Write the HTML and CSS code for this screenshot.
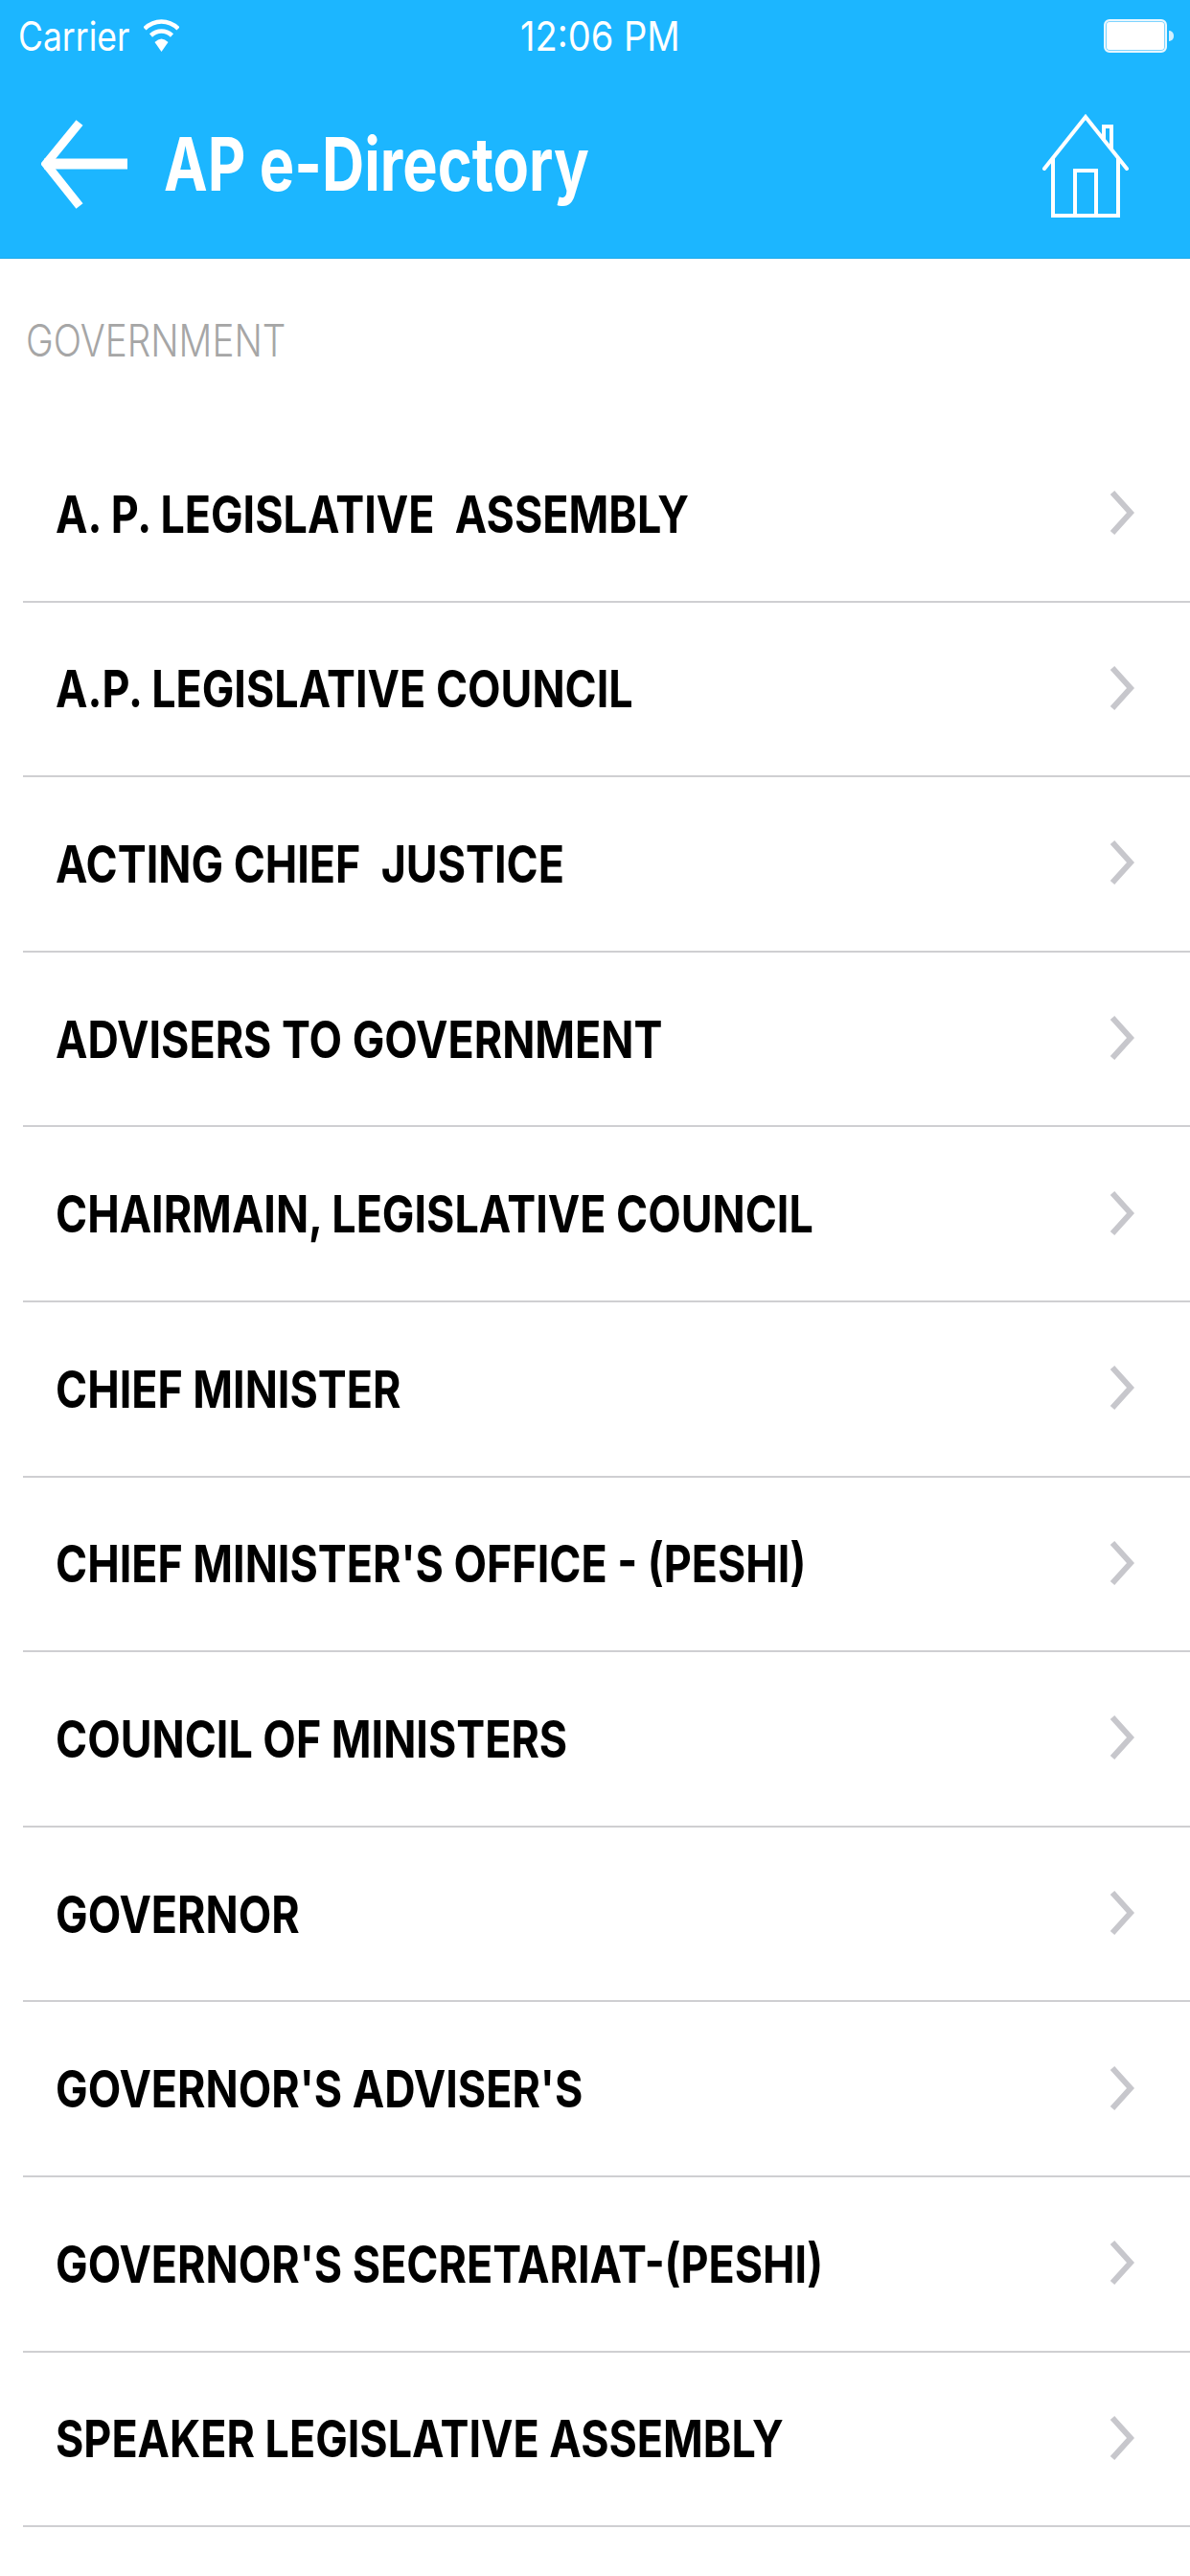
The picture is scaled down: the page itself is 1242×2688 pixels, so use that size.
FILE: index.html
```html
<!DOCTYPE html>
<html lang="en">
<head>
    <meta charset="UTF-8">
    <title>AP e-Directory</title>
    <link rel="stylesheet" href="styles.css">
</head>
<body>
    <header class="top">
        <div class="status-bar">
            <div class="status-left">
                <span class="carrier">Carrier</span>
                <svg class="wifi" viewBox="0 0 37 35">
                    <path d="M1 11C11 1 26 1 36 11" fill="none" stroke="#fff" stroke-width="4.5"/>
                    <path d="M7.5 18C14 12 23 12 29.5 18" fill="none" stroke="#fff" stroke-width="4.5"/>
                    <path d="M11.5 25Q18.5 18 25.5 25L18.5 35Z" fill="#fff"/>
                </svg>
            </div>
            <span class="clock">12:06 PM</span>
            <div class="battery"><div class="battery-body"></div><div class="battery-nub"></div></div>
        </div>
        <div class="nav-bar">
            <svg class="back" viewBox="0 0 92 94">
                <path d="M3 46H90" fill="none" stroke="#fff" stroke-width="11"/>
                <path d="M40 3L5 46L40 90" fill="none" stroke="#fff" stroke-width="9"/>
            </svg>
            <h1 class="title">AP e-Directory</h1>
            <svg class="home" viewBox="0 0 90 110">
                <g fill="none" stroke="#fff" stroke-width="4">
                    <path d="M2 59L45 5L88 59" stroke-linecap="round"/>
                    <path d="M11 48V108H79V48"/>
                    <path d="M34 108V61H56V108"/>
                    <path d="M64 30V15H72V40"/>
                </g>
            </svg>
        </div>
    </header>

    <main>
        <div class="section-title"><span class="section-label">GOVERNMENT</span></div>
        <ul class="list">
            <li class="row"><span class="row-label">A. P. LEGISLATIVE  ASSEMBLY</span><svg class="chevron" viewBox="0 0 26 48"><path d="M3 3L22 24L3 45"/></svg></li>
            <li class="row"><span class="row-label">A.P. LEGISLATIVE COUNCIL</span><svg class="chevron" viewBox="0 0 26 48"><path d="M3 3L22 24L3 45"/></svg></li>
            <li class="row"><span class="row-label">ACTING CHIEF  JUSTICE</span><svg class="chevron" viewBox="0 0 26 48"><path d="M3 3L22 24L3 45"/></svg></li>
            <li class="row"><span class="row-label">ADVISERS TO GOVERNMENT</span><svg class="chevron" viewBox="0 0 26 48"><path d="M3 3L22 24L3 45"/></svg></li>
            <li class="row"><span class="row-label">CHAIRMAIN, LEGISLATIVE COUNCIL</span><svg class="chevron" viewBox="0 0 26 48"><path d="M3 3L22 24L3 45"/></svg></li>
            <li class="row"><span class="row-label">CHIEF MINISTER</span><svg class="chevron" viewBox="0 0 26 48"><path d="M3 3L22 24L3 45"/></svg></li>
            <li class="row"><span class="row-label">CHIEF MINISTER'S OFFICE - (PESHI)</span><svg class="chevron" viewBox="0 0 26 48"><path d="M3 3L22 24L3 45"/></svg></li>
            <li class="row"><span class="row-label">COUNCIL OF MINISTERS</span><svg class="chevron" viewBox="0 0 26 48"><path d="M3 3L22 24L3 45"/></svg></li>
            <li class="row"><span class="row-label">GOVERNOR</span><svg class="chevron" viewBox="0 0 26 48"><path d="M3 3L22 24L3 45"/></svg></li>
            <li class="row"><span class="row-label">GOVERNOR'S ADVISER'S</span><svg class="chevron" viewBox="0 0 26 48"><path d="M3 3L22 24L3 45"/></svg></li>
            <li class="row"><span class="row-label">GOVERNOR'S SECRETARIAT-(PESHI)</span><svg class="chevron" viewBox="0 0 26 48"><path d="M3 3L22 24L3 45"/></svg></li>
            <li class="row"><span class="row-label">SPEAKER LEGISLATIVE ASSEMBLY</span><svg class="chevron" viewBox="0 0 26 48"><path d="M3 3L22 24L3 45"/></svg></li>
        </ul>
    </main>
</body>
</html>
```

FILE: styles.css
```css
* {
    box-sizing: border-box;
}

html, body {
    margin: 0;
    height: 2688px;
    overflow: hidden;
}

body {
    font-family: Inter, Roboto, "Liberation Sans", sans-serif;
    background-color: #fff;
    color: #000;
}

/* the reference text is narrower than the installed fonts, so labels get squeezed */
.carrier,
.clock,
.title,
.section-label,
.row-label {
    display: inline-block;
    white-space: pre;
    transform-origin: left center;
}

.top {
    height: 270px;
    background-color: #1cb6ff;
    color: #fff;
    border-bottom: 1px solid #1aa9ea;
}

.status-bar {
    height: 75px;
    padding: 0 17px 0 19px;
    display: grid;
    grid-template-columns: 524px auto 1fr;
    align-items: center;
}

.status-left {
    display: flex;
    align-items: center;
    gap: 17px;
}

.carrier,
.clock {
    font-size: 42px;
    font-weight: 400;
}

.carrier {
    width: 114px;
    transform: scaleX(0.845);
}

.clock {
    transform: scaleX(0.906);
}

.wifi {
    width: 37px;
    height: 35px;
    margin-top: -3px;
}

.battery {
    display: flex;
    align-items: center;
    justify-content: flex-end;
}

.battery-body {
    width: 66px;
    height: 35px;
    background-color: #fff;
    border: 2px solid #e8f7ff;
    border-radius: 6px;
    box-shadow: inset 0 0 0 1px #7fd4ff;
}

.battery-nub {
    width: 5px;
    height: 11px;
    margin-left: 2px;
    background-color: #d3f0ff;
    border-radius: 0 5px 5px 0;
}

.nav-bar {
    height: 194px;
    padding: 0 64px 0 43px;
    display: flex;
    align-items: center;
}

.back {
    width: 92px;
    height: 94px;
    flex-shrink: 0;
}

.title {
    margin: 0 auto 2px 36px;
    font-size: 77px;
    font-weight: 700;
    transform: scaleX(0.795);
}

.home {
    width: 90px;
    height: 110px;
    flex-shrink: 0;
}

.section-title {
    height: 176px;
    padding: 57px 0 0 27px;
    font-size: 46px;
    font-weight: 300;
    color: #a6a6a6;
}

.section-label {
    transform: scaleX(0.84);
}

.list {
    list-style: none;
    margin: 0;
    padding: 0;
}

.row {
    height: 182.6px;
    margin-left: 24px;
    padding: 0 58px 0 34px;
    display: flex;
    align-items: center;
    justify-content: space-between;
    border-bottom: 2px solid #cfcfd2;
}

.row-label {
    font-size: 54px;
    font-weight: 700;
    transform: scaleX(0.83);
}

.chevron {
    width: 26px;
    height: 48px;
    margin-top: -2px;
    fill: none;
    stroke: #c7c7cc;
    stroke-width: 6;
}
```
